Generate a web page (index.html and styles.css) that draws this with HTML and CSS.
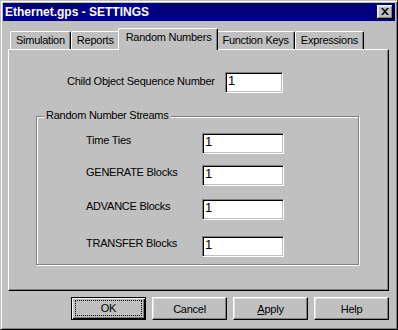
FILE: index.html
```html
<!DOCTYPE html>
<html>
<head>
<meta charset="utf-8">
<link rel="stylesheet" href="styles.css">
</head>
<body>
<div class="window">
  <div class="titlebar">
    <span class="title">Ethernet.gps - SETTINGS</span>
    <span class="close"><svg width="8" height="7" viewBox="0 0 8 7"><path d="M0 0h2l2 2.2L6 0h2L5 3.5 8 7H6L4 4.8 2 7H0l3-3.5z" fill="#000"/></svg></span>
  </div>
  <div class="tabs">
    <div class="tab">Simulation</div>
    <div class="tab">Reports</div>
    <div class="tab active">Random Numbers</div>
    <div class="tab">Function Keys</div>
    <div class="tab">Expressions</div>
  </div>
  <div class="panel">
    <div class="child-row">
      <span class="label">Child Object Sequence Number</span>
      <div class="field short">1</div>
    </div>
    <div class="group">
      <span class="legend">Random Number Streams</span>
      <div class="stream-row"><span class="label">Time Ties</span><div class="field">1</div></div>
      <div class="stream-row"><span class="label">GENERATE Blocks</span><div class="field">1</div></div>
      <div class="stream-row"><span class="label">ADVANCE Blocks</span><div class="field">1</div></div>
      <div class="stream-row"><span class="label">TRANSFER Blocks</span><div class="field">1</div></div>
    </div>
  </div>
  <div class="buttons">
    <div class="btn default"><span class="focus">OK</span></div>
    <div class="btn"><span class="caption">Cancel</span></div>
    <div class="btn"><span class="caption"><u>A</u>pply</span></div>
    <div class="btn"><span class="caption">Help</span></div>
  </div>
</div>
</body>
</html>
```
FILE: styles.css
```css
html, body {
  margin: 0;
  padding: 0;
  background: #c0c0c0;
}
body {
  font-family: "Liberation Sans", Arial, sans-serif;
  font-size: 11px;
  letter-spacing: -0.25px;
  color: #000;
}
.window {
  width: 398px;
  height: 330px;
  box-sizing: border-box;
  border: 1px solid;
  border-color: #c0c0c0 #000 #000 #c0c0c0;
  box-shadow: inset 1px 1px #fff, inset -1px -1px #808080;
  padding: 2px;
  background: #c0c0c0;
  display: flex;
  flex-direction: column;
}
.titlebar {
  height: 18px;
  flex: none;
  background: #000080;
  display: flex;
  align-items: center;
  justify-content: space-between;
  padding: 0 2px;
}
.title {
  color: #fff;
  font-weight: bold;
  font-size: 12px;
  letter-spacing: 0;
}
.close {
  width: 16px;
  height: 14px;
  box-sizing: border-box;
  background: #c0c0c0;
  box-shadow: inset -1px -1px #000, inset 1px 1px #fff, inset -2px -2px #808080, inset 2px 2px #dfdfdf;
  display: flex;
  align-items: center;
  justify-content: center;
  padding: 0 1px 1px 0;
}
.close svg { display: block; }
.tabs {
  display: flex;
  align-items: flex-end;
  height: 21px;
  flex: none;
  margin-top: 7px;
  padding-left: 7px;
  position: relative;
  z-index: 1;
}
.tab {
  height: 18px;
  box-sizing: border-box;
  padding: 2px 5px 0 5px;
  line-height: 13px;
  border-top: 1px solid #fff;
  border-left: 1px solid #fff;
  border-right: 1px solid #000;
  border-radius: 2px 2px 0 0;
  box-shadow: inset -1px 0 #808080;
  background: #c0c0c0;
  white-space: nowrap;
}
.tab.active {
  height: 22px;
  margin: 0 -2px -1px;
  padding: 2px 6px 0 7px;
  position: relative;
  z-index: 2;
}
.panel {
  margin-left: 5px;
  width: 381px;
  height: 242px;
  flex: none;
  box-sizing: border-box;
  border-style: solid;
  border-width: 1px;
  border-color: #fff #000 #000 #fff;
  box-shadow: inset -1px -1px #808080;
  padding-top: 22px;
  padding-left: 58px;
}
.child-row {
  display: grid;
  grid-template-columns: 158px 58px;
  align-items: start;
}
.child-row .label {
  padding-top: 3px;
}
.label { white-space: nowrap; }
.field {
  height: 21px;
  box-sizing: border-box;
  background: #fff;
  border: 1px solid;
  border-color: #808080 #fff #fff #808080;
  box-shadow: inset 1px 1px #000, inset -1px -1px #c0c0c0;
  font-size: 13px;
  line-height: 15px;
  padding-left: 2px;
  letter-spacing: 0;
}
.group {
  position: relative;
  margin-top: 23px;
  margin-left: -31px;
  width: 323px;
  height: 149px;
  box-sizing: border-box;
  border: 1px solid #808080;
  box-shadow: inset 1px 1px #fff, 1px 1px 0 #fff;
  padding-top: 16px;
  padding-left: 49px;
}
.legend {
  position: absolute;
  left: 7px;
  top: -8px;
  padding: 0 2px;
  background: #c0c0c0;
  line-height: 13px;
}
.stream-row {
  display: grid;
  grid-template-columns: 116px 82px;
  align-items: start;
}
.stream-row .label { padding-top: 1px; }
.stream-row:nth-of-type(2) { margin-top: 11px; }
.stream-row:nth-of-type(3) { margin-top: 13px; }
.stream-row:nth-of-type(4) { margin-top: 16px; }
.buttons {
  display: flex;
  justify-content: flex-end;
  gap: 6px;
  margin-top: 6px;
  padding-right: 6px;
}
.btn {
  width: 75px;
  height: 23px;
  box-sizing: border-box;
  background: #c0c0c0;
  border: 1px solid;
  border-color: #fff #000 #000 #fff;
  box-shadow: inset -1px -1px #808080, inset 1px 1px #dfdfdf;
  display: flex;
  align-items: center;
  justify-content: center;
}
.btn.default {
  border-color: #000;
  box-shadow: inset 1px 1px #fff, inset -1px -1px #000, inset -2px -2px #808080;
  align-items: stretch;
  justify-content: stretch;
}
.focus {
  flex: 1;
  margin: 2px 3px 3px 3px;
  border: 1px dotted #000;
  display: flex;
  align-items: center;
  justify-content: center;
}
.caption { display: block; }
```
